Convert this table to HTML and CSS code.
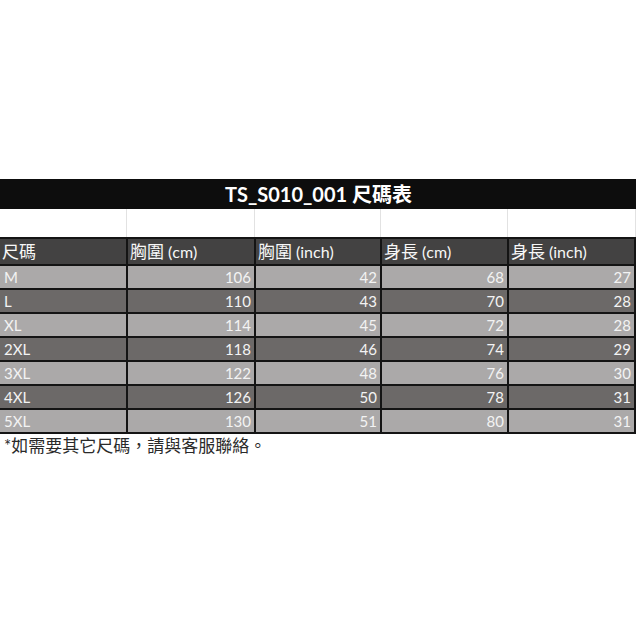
FILE: index.html
```html
<!DOCTYPE html>
<html>
<head>
<meta charset="utf-8">
<link rel="stylesheet" href="styles.css">
</head>
<body>
<div class="sheet">
  <div class="title">TS_S010_001 尺碼表</div>
  <div class="blank">
    <span></span><span></span><span></span><span></span><span></span>
  </div>
  <div class="grid">
    <div class="cell head">尺碼</div>
    <div class="cell head">胸圍<span class="lat">(cm)</span></div>
    <div class="cell head">胸圍<span class="lat">(inch)</span></div>
    <div class="cell head">身長<span class="lat">(cm)</span></div>
    <div class="cell head">身長<span class="lat">(inch)</span></div>

    <div class="cell light">M</div><div class="cell light num">106</div><div class="cell light num">42</div><div class="cell light num">68</div><div class="cell light num">27</div>
    <div class="cell dark">L</div><div class="cell dark num">110</div><div class="cell dark num">43</div><div class="cell dark num">70</div><div class="cell dark num">28</div>
    <div class="cell light">XL</div><div class="cell light num">114</div><div class="cell light num">45</div><div class="cell light num">72</div><div class="cell light num">28</div>
    <div class="cell dark">2XL</div><div class="cell dark num">118</div><div class="cell dark num">46</div><div class="cell dark num">74</div><div class="cell dark num">29</div>
    <div class="cell light">3XL</div><div class="cell light num">122</div><div class="cell light num">48</div><div class="cell light num">76</div><div class="cell light num">30</div>
    <div class="cell dark">4XL</div><div class="cell dark num">126</div><div class="cell dark num">50</div><div class="cell dark num">78</div><div class="cell dark num">31</div>
    <div class="cell light">5XL</div><div class="cell light num">130</div><div class="cell light num">51</div><div class="cell light num">80</div><div class="cell light num">31</div>
  </div>
  <div class="note">*如需要其它尺碼，請與客服聯絡。</div>
</div>
</body>
</html>
```

FILE: styles.css
```css
html, body {
  margin: 0;
  padding: 0;
  background: #ffffff;
}
body {
  font-family: Lato, "Noto Sans CJK TC", sans-serif;
}
.sheet {
  width: 636px;
  padding-top: 179px;
}
.title {
  height: 30px;
  background: #0d0d0d;
  color: #ffffff;
  font-weight: bold;
  font-size: 20px;
  line-height: 31px;
  text-align: center;
  padding-left: 1px;
}
.blank {
  height: 28px;
  display: grid;
  grid-template-columns: 127px 128px 126px 127px 128px;
}
.blank span {
  border-right: 1px solid #e2e2e2;
}
.grid {
  display: grid;
  grid-template-columns: 126px 126px 124px 125px 125px;
  grid-template-rows: 25px repeat(7, 22px);
  gap: 2px;
  background: #141414;
  padding: 2px 2px 2px 0;
}
.cell {
  color: #f3f3f3;
  font-size: 15px;
  line-height: 22px;
  padding: 0 3px 0 4px;
  white-space: nowrap;
  overflow: hidden;
}
.head {
  background: #434242;
  font-size: 17px;
  line-height: 26px;
  padding-left: 2px;
  color: #f7f7f7;
}
.head .lat {
  font-size: 16px;
  margin-left: 4px;
}
.light {
  background: #aba9a9;
}
.dark {
  background: #6c6968;
}
.num {
  text-align: right;
}
.note {
  font-size: 17px;
  color: #2a2a2a;
  padding-left: 4px;
  line-height: 22px;
  margin-top: 1px;
}
```
